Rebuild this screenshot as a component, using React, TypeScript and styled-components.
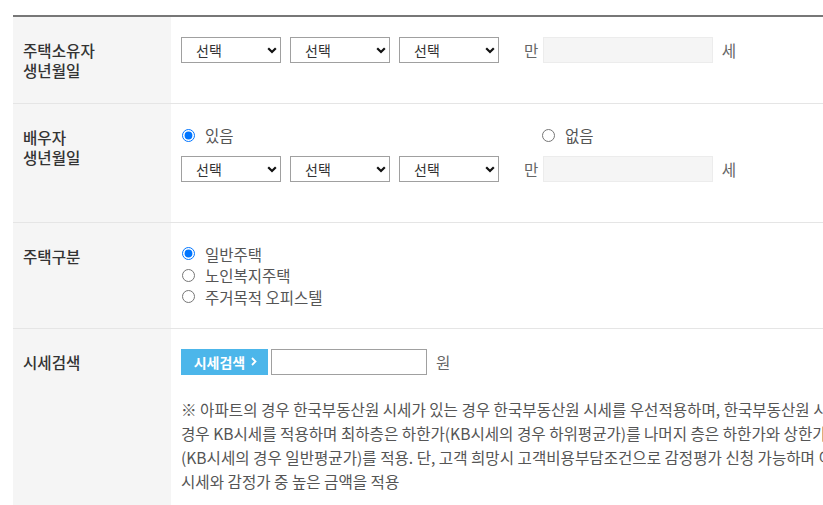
import React from "react";
import styled, { createGlobalStyle } from "styled-components";

const Global = createGlobalStyle`
  html, body { margin: 0; padding: 0; background: #fff; overflow: hidden; }
  body { font-family: "Noto Sans CJK KR", "Noto Sans", sans-serif; color: #333; }
`;

const Page = styled.div`
  padding: 15px 0 0 13px;
  width: 1300px;
`;

const Table = styled.table`
  width: 1250px;
  border-collapse: collapse;
  border-top: 2px solid #777;
  table-layout: fixed;
`;

const Row = styled.tr`
  border-bottom: 1px solid #e5e5e5;
`;

const Head = styled.th`
  width: 158px;
  box-sizing: border-box;
  background: #f5f5f5;
  padding: 23px 10px;
  text-align: left;
  vertical-align: top;
  font-size: 15.6px;
  line-height: 20px;
  font-weight: 500;
  color: #333;
`;

const Cell = styled.td`
  padding: 20px 10px;
  vertical-align: top;
  font-size: 15.6px;
  color: #555;
`;

const DateLine = styled.div`
  display: flex;
  align-items: center;
  height: 26px;
  margin-bottom: 20px;
`;

const SelectWrap = styled.div`
  position: relative;
  width: 100px;
  height: 26px;
  margin-right: 9px;
`;

const Select = styled.select`
  appearance: none;
  -webkit-appearance: none;
  width: 100%;
  height: 100%;
  box-sizing: border-box;
  border: 1px solid #a0a0a0;
  border-radius: 0;
  background: #fff;
  padding: 0 0 0 14px;
  font-family: inherit;
  font-size: 14px;
  color: #333;
  outline: none;
`;

const Chevron = styled.svg`
  position: absolute;
  right: 4px;
  top: 10px;
  width: 10px;
  height: 7px;
  pointer-events: none;
`;

const Unit = styled.span<{ $after?: boolean }>`
  font-size: 15.6px;
  color: #666;
  margin: ${(p) => (p.$after ? "0 0 0 9px" : "0 4.5px 0 16px")};
`;

const AgeInput = styled.input`
  width: 170px;
  height: 26px;
  box-sizing: border-box;
  background: #f5f5f5;
  border: 1px solid #ececec;
  outline: none;
`;

const RadioRow = styled.div`
  display: flex;
  height: 22px;
  align-items: center;
  margin-bottom: 10px;
`;

const RadioList = styled.div`
  display: flex;
  flex-direction: column;
`;

const RadioLabel = styled.label<{ $w?: number }>`
  display: flex;
  align-items: center;
  height: 21.5px;
  width: ${(p) => (p.$w ? `${p.$w}px` : "auto")};
  font-size: 15.5px;
  color: #555;
`;

const Radio = styled.input`
  width: 13px;
  height: 13px;
  margin: 0 10px 0 1px;
`;

const SearchLine = styled.div`
  display: flex;
  align-items: center;
  height: 26px;
`;

const SearchButton = styled.button`
  height: 26px;
  width: 87px;
  border: none;
  background: #4cb6ea;
  color: #fff;
  font-family: inherit;
  font-size: 14px;
  font-weight: 700;
  padding: 0 0 0 2px;
  display: flex;
  align-items: center;
  justify-content: center;
  gap: 6px;
`;

const PriceInput = styled.input`
  width: 156px;
  height: 26px;
  box-sizing: border-box;
  border: 1px solid #a0a0a0;
  margin-left: 3px;
  outline: none;
`;

const Won = styled.span`
  margin-left: 9px;
  font-size: 15.6px;
  color: #666;
`;

const Note = styled.p`
  margin: 22px 0 0;
  font-size: 15.6px;
  line-height: 24px;
  color: #555;
  white-space: nowrap;
`;

const SelectBox = () => (
  <SelectWrap>
    <Select defaultValue="">
      <option value="">선택</option>
    </Select>
    <Chevron viewBox="0 0 10 7">
      <polyline points="1.2,1.2 5,5 8.8,1.2" fill="none" stroke="#111" strokeWidth="2.2" />
    </Chevron>
  </SelectWrap>
);

const DateGroup = () => (
  <DateLine>
    <SelectBox />
    <SelectBox />
    <SelectBox />
    <Unit>만</Unit>
    <AgeInput />
    <Unit $after>세</Unit>
  </DateLine>
);

export default function App() {
  return (
    <Page>
      <Global />
      <Table>
        <tbody>
          <Row>
            <Head>
              주택소유자
              <br />
              생년월일
            </Head>
            <Cell>
              <DateGroup />
            </Cell>
          </Row>
          <Row>
            <Head>
              배우자
              <br />
              생년월일
            </Head>
            <Cell>
              <RadioRow>
                <RadioLabel $w={360}>
                  <Radio type="radio" name="spouse" defaultChecked />
                  있음
                </RadioLabel>
                <RadioLabel>
                  <Radio type="radio" name="spouse" />
                  없음
                </RadioLabel>
              </RadioRow>
              <DateGroup />
            </Cell>
          </Row>
          <Row>
            <Head>주택구분</Head>
            <Cell>
              <RadioList>
                <RadioLabel>
                  <Radio type="radio" name="house" defaultChecked />
                  일반주택
                </RadioLabel>
                <RadioLabel>
                  <Radio type="radio" name="house" />
                  노인복지주택
                </RadioLabel>
                <RadioLabel>
                  <Radio type="radio" name="house" />
                  주거목적 오피스텔
                </RadioLabel>
              </RadioList>
            </Cell>
          </Row>
          <Row>
            <Head>시세검색</Head>
            <Cell>
              <SearchLine>
                <SearchButton type="button">
                  시세검색
                  <svg width="6" height="9" viewBox="0 0 6 9">
                    <polyline points="1,1 4.5,4.5 1,8" fill="none" stroke="#fff" strokeWidth="1.8" />
                  </svg>
                </SearchButton>
                <PriceInput />
                <Won>원</Won>
              </SearchLine>
              <Note>
                ※ 아파트의 경우 한국부동산원 시세가 있는 경우 한국부동산원 시세를 우선적용하며, 한국부동산원 시세가 없는
                <br />
                경우 KB시세를 적용하며 최하층은 하한가(KB시세의 경우 하위평균가)를 나머지 층은 하한가와 상한가의 평균가
                <br />
                (KB시세의 경우 일반평균가)를 적용. 단, 고객 희망시 고객비용부담조건으로 감정평가 신청 가능하며 이 경우
                <br />
                시세와 감정가 중 높은 금액을 적용
              </Note>
            </Cell>
          </Row>
        </tbody>
      </Table>
    </Page>
  );
}
